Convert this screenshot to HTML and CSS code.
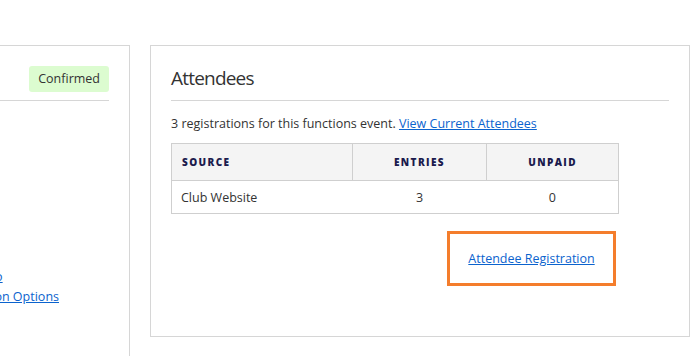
FILE: index.html
```html
<!DOCTYPE html>
<html lang="en">
<head>
    <meta charset="UTF-8">
    <meta name="viewport" content="width=device-width, initial-scale=1.0">
    <title>Function Event</title>
    <link rel="stylesheet" href="styles.css">
</head>
<body>
    <div class="columns">
        <div class="card details-card">
            <div class="details-head">
                <span class="status-badge">Confirmed</span>
            </div>
            <div class="details-links">
                <a href="#">Venue Info</a>
                <a href="#">Registration Options</a>
            </div>
        </div>

        <div class="card attendees-card">
            <h2 class="card-title">Attendees</h2>
            <p class="summary">3 registrations for this functions event. <a href="#">View Current Attendees</a></p>
            <table class="source-table">
                <thead>
                    <tr>
                        <th class="col-source">Source</th>
                        <th>Entries</th>
                        <th>Unpaid</th>
                    </tr>
                </thead>
                <tbody>
                    <tr>
                        <td class="col-source">Club Website</td>
                        <td>3</td>
                        <td>0</td>
                    </tr>
                </tbody>
            </table>
            <div class="register-row">
                <div class="register-box">
                    <a href="#">Attendee Registration</a>
                </div>
            </div>
        </div>
    </div>
</body>
</html>
```

FILE: styles.css
```css
body {
    font-family: "Open Sans", "Liberation Sans", sans-serif;
    font-size: 12.5px;
    color: #333;
    margin: 0;
    background-color: #fff;
    overflow: hidden;
}
a {
    color: #0b63ce;
}
.columns {
    display: flex;
    align-items: flex-start;
    gap: 20px;
    padding-top: 45px;
}
.card {
    border: 1px solid #d6d6d6;
    background-color: #fff;
    box-sizing: border-box;
}
.details-card {
    width: 300px;
    margin-left: -170px;
    height: 340px;
    padding: 20px 20px 0 20px;
    display: flex;
    flex-direction: column;
}
.details-head {
    display: flex;
    justify-content: flex-end;
    padding-bottom: 8px;
    border-bottom: 1px solid #d6d6d6;
}
.status-badge {
    background-color: #dcfcd0;
    border-radius: 3px;
    height: 26px;
    line-height: 26px;
    padding: 0 9px;
    color: #333;
}
.details-links {
    align-self: flex-end;
    display: flex;
    flex-direction: column;
    align-items: flex-start;
    margin-top: 166px;
    line-height: 20px;
    margin-right: 50px;
}
.attendees-card {
    width: 540px;
    height: 292px;
    padding: 20px 20px 0 20px;
}
.card-title {
    font-size: 19px;
    font-weight: 400;
    letter-spacing: -0.8px;
    line-height: 24px;
    margin: 0;
    padding-bottom: 10px;
    border-bottom: 1px solid #d6d6d6;
    color: #333;
}
.summary {
    margin: 13px 0 9px 0;
    line-height: 20px;
}
.source-table {
    width: 90%;
    border-collapse: collapse;
    border: 1px solid #cfcfcf;
}
.source-table th {
    background-color: #f4f4f4;
    height: 36px;
    font-size: 10px;
    font-weight: 800;
    letter-spacing: 1.4px;
    text-transform: uppercase;
    color: #1b1b4d;
    text-align: center;
    border: 1px solid #cfcfcf;
    padding: 0 10px;
}
.source-table td {
    height: 32px;
    text-align: center;
    padding: 0 9px;
}
.source-table .col-source {
    text-align: left;
    width: 160px;
}
.source-table th:nth-child(2) {
    width: 113px;
}
.register-row {
    width: 447px;
    display: flex;
    justify-content: flex-end;
    margin-top: 17px;
}
.register-box {
    border: 3px solid #f47d2c;
    width: 169px;
    height: 55px;
    box-sizing: border-box;
    display: flex;
    align-items: center;
    justify-content: center;
    margin-right: 2px;
}
```
